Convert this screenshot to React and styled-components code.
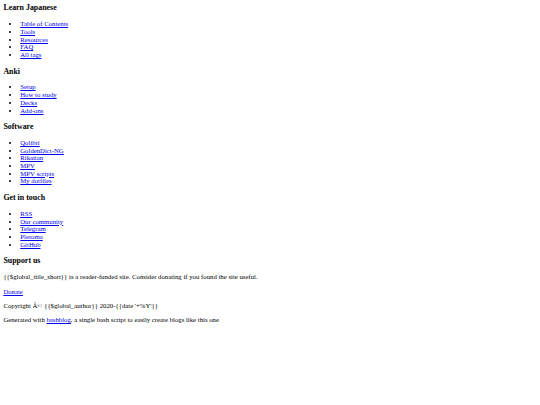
import styled, { createGlobalStyle } from 'styled-components'

// page is drawn at 0.421875 of the usual default sizes (16px -> 6.75px)
const GlobalStyle = createGlobalStyle`
    body{
        margin: 3.375px;
        background: #fff;
        color: #000;
        font-family: "Liberation Serif", "Times New Roman", serif;
        font-size: 6.75px;
        line-height: 7.68px;
    }
`

const Page = styled.div`
    display: block;
`

const Nav = styled.nav`
    display: block;

    section:first-child h3{
        margin-top: 0;
    }
`

const Section = styled.section`
    display: block;
`

const Heading = styled.h3`
    font-size: 7.9px;
    line-height: 9px;
    font-weight: bold;
    margin: 7.9px 0;
`

const LinkList = styled.ul`
    margin: 6.75px 0;
    padding-left: 16.875px;
    list-style: disc;
`

const Item = styled.li`
    display: list-item;
`

const Link = styled.a`
    color: #0000ee;
    text-decoration: underline;
`

const Paragraph = styled.p`
    margin: 6.75px 0;
`

const menu = [
    { title: 'Learn Japanese', links: ['Table of Contents', 'Tools', 'Resources', 'FAQ', 'All tags'] },
    { title: 'Anki', links: ['Setup', 'How to study', 'Decks', 'Add-ons'] },
    { title: 'Software', links: ['Qolibri', 'GoldenDict-NG', 'Rikaitan', 'MPV', 'MPV scripts', 'My dotfiles'] },
    { title: 'Get in touch', links: ['RSS', 'Our community', 'Telegram', 'Pleroma', 'GitHub'] },
]

function App() {
    return (
        <Page>
            <GlobalStyle />
            <Nav>
                {menu.map(section => (
                    <Section key={section.title}>
                        <Heading>{section.title}</Heading>
                        <LinkList>
                            {section.links.map(link => (
                                <Item key={link}><Link href="#">{link}</Link></Item>
                            ))}
                        </LinkList>
                    </Section>
                ))}
            </Nav>
            <footer>
                <Heading>Support us</Heading>
                <Paragraph>{'{{$global_title_short}}'} is a reader-funded site. Consider donating if you found the site useful.</Paragraph>
                <Paragraph><Link href="#">Donate</Link></Paragraph>
                <Paragraph>Copyright Â© {'{{$global_author}}'} 2020-{"{{date '+%Y'}}"}</Paragraph>
                <Paragraph>Generated with <Link href="#">bashblog</Link>, a single bash script to easily create blogs like this one</Paragraph>
            </footer>
        </Page>
    )
}

export default App
